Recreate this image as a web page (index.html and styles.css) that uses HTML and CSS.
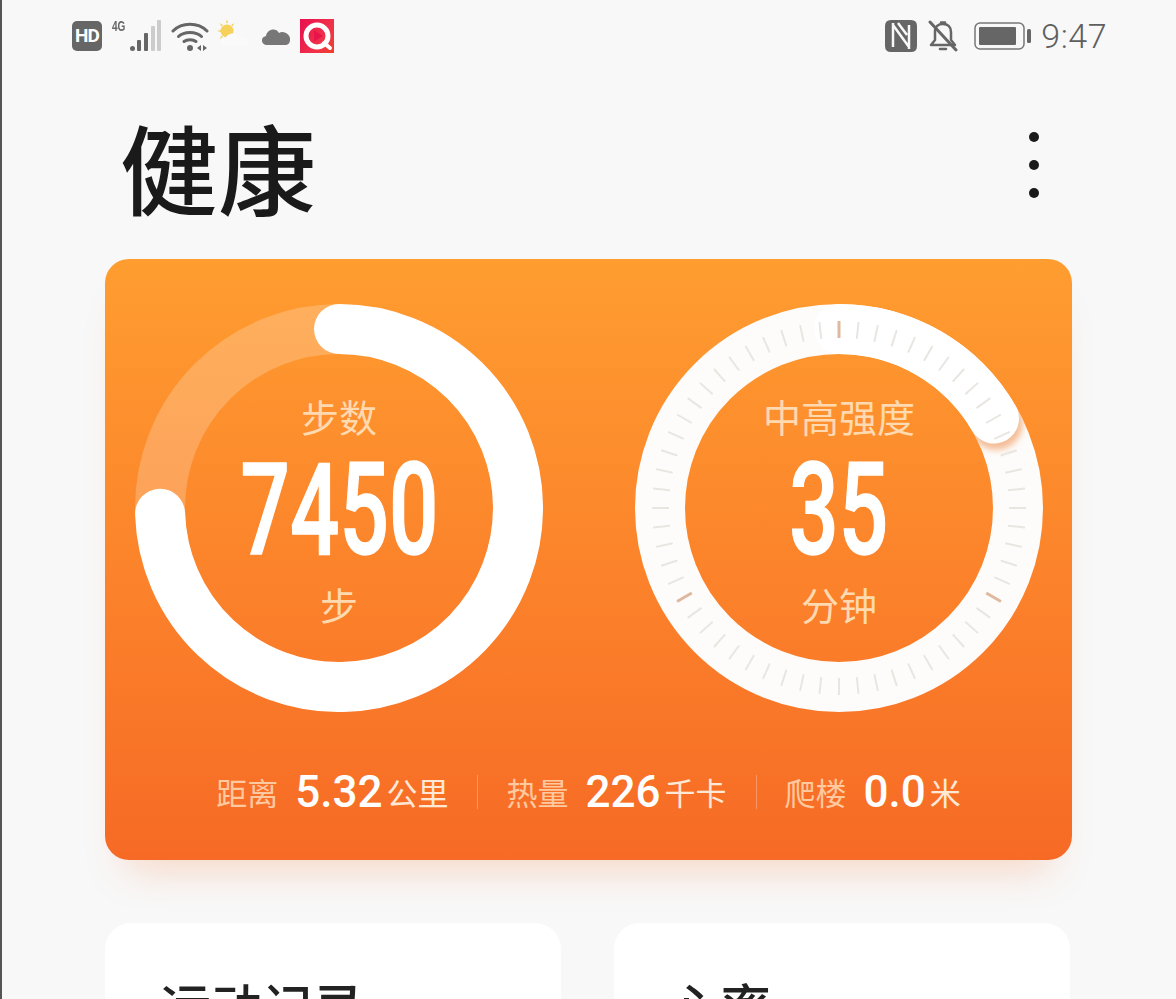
FILE: index.html
```html
<!DOCTYPE html>
<html lang="zh">
<head>
<meta charset="utf-8">
<title>健康</title>
<link rel="stylesheet" href="styles.css">
</head>
<body>
<div class="page">
  <header class="status">
    <div class="status-left">
      <span class="hd">HD</span>
      <span class="net"><span class="net-label">4G</span>
        <svg class="signal" width="32" height="32" viewBox="0 0 32 32"><rect x="0" y="26" width="5" height="5" rx="2.5" fill="#666"/><rect x="7" y="20" width="4" height="11" rx="1" fill="#666"/><rect x="14" y="13" width="4" height="18" rx="1" fill="#666"/><rect x="21" y="6" width="4" height="25" rx="1" fill="#ccc"/><rect x="27" y="0" width="4" height="31" rx="1" fill="#ccc"/></svg>
      </span>
      <svg class="wifi" width="38" height="32" viewBox="0 0 38 32" fill="none" stroke="#666" stroke-width="3" stroke-linecap="round"><path d="M2 10 C11 1 27 1 36 10"/><path d="M7.500 15.500 C13 10 25 10 30.500 15.500"/><path d="M13 20.500 C16 18 22 18 25 20.500"/><circle cx="19" cy="27" r="3" fill="#666" stroke="none"/><path d="M26 27 L30 24 V30 Z M32 24 V30 L36 27 Z" fill="#666" stroke="none"/></svg>
      <svg class="weather" width="34" height="34" viewBox="0 0 34 34"><g fill="#f6d25a"><circle cx="10" cy="13" r="6.500"/><path d="M10 1 L11 5 H9Z M0 13 L4 12 V14Z M2.500 5 L6 7 L4.500 8.500Z M17.500 5 L14 7 L15.500 8.500Z M2.500 21 L6 19 L4.500 17.500Z"/></g><path d="M7 28 C2 28 2 21 8 21 C10 15 19 13 22 20 C27 18 33 22 32 28 Z" fill="#fafafa"/></svg>
      <svg class="cloud" width="31" height="24" viewBox="0 0 31 24"><path d="M7 21 C1 21 0 13 6 12 C7 5 16 3 19 9 C24 6 31 11 30 16 C30 19 28 21 25 21 Z" fill="#777"/></svg>
      <span class="applogo"><svg width="34" height="34" viewBox="0 0 34 34"><circle cx="17" cy="17" r="11" fill="none" stroke="#fff" stroke-width="5"/><path d="M24 24 L30 29" stroke="#fff" stroke-width="4" stroke-linecap="round"/><path d="M14 11.500 L23 17 L14 22.500 Z" fill="#e8144c"/></svg></span>
    </div>
    <div class="status-right">
      <svg class="nfc" width="32" height="32" viewBox="0 0 32 32"><path d="M6 0 H26 Q32 0 32 6 V26 Q32 32 26 32 H6 Q0 32 0 26 V6 Q0 0 6 0 Z" fill="#666"/><path d="M8 3 V27 M8 5 L24 27 M24 5 V29 M13 3 L22 15" fill="none" stroke="#f8f8f8" stroke-width="2.500"/></svg>
      <svg class="bell" width="30" height="32" viewBox="0 0 30 32" fill="none" stroke="#666" stroke-width="2.500" stroke-linecap="round" stroke-linejoin="round"><path d="M7 11 C7 7 10 4 15 4 C20 4 23 7 23 12 V20 L27 25 H3 L7 20 Z"/><path d="M13 2.500 H17 M12 29 H18"/><path d="M2 2 L28 30" stroke-width="3"/></svg>
      <svg class="battery" width="58" height="28" viewBox="0 0 58 28"><rect x="1" y="1" width="49" height="26" rx="5" fill="none" stroke="#777" stroke-width="1.500"/><rect x="5" y="5" width="37" height="18" rx="1" fill="#666"/><rect x="53" y="7" width="4" height="14" rx="1.500" fill="#666"/></svg>
      <span class="clock">9:47</span>
    </div>
  </header>

  <section class="head">
    <h1 class="title">健康</h1>
    <div class="more"><i></i><i></i><i></i></div>
  </section>

  <section class="summary">
    <div class="rings">
      <div class="ring">
        <svg class="ring-art" width="408" height="408" viewBox="0 0 408 408" fill="none">
          <circle cx="204" cy="204" r="179" stroke="#fff" stroke-opacity=".22" stroke-width="50"/>
          <path id="steps-arc" d="M204 25 A179 179 0 1 1 25.100 209.700" stroke="#fff" stroke-width="50" stroke-linecap="round"/>
        </svg>
        <div class="ring-text">
          <span class="ring-label">步数</span>
          <span class="ring-value">7450</span>
          <span class="ring-label">步</span>
        </div>
      </div>
      <div class="ring">
        <svg class="ring-art" id="dial" width="408" height="408" viewBox="0 0 408 408" fill="none">
          <defs>
            <clipPath id="band"><path clip-rule="evenodd" d="M204 0 A204 204 0 1 1 204 408 A204 204 0 1 1 204 0 Z M204 50 A154 154 0 1 0 204 358 A154 154 0 1 0 204 50 Z"/></clipPath>
            <filter id="soft" x="-50%" y="-50%" width="200%" height="200%"><feGaussianBlur stdDeviation="3"/></filter>
          </defs>
          <circle cx="204" cy="204" r="179" stroke="#fdfcfa" stroke-width="50"/>
          <g clip-path="url(#band)"><circle cx="361" cy="119" r="27" fill="#f4bd97" filter="url(#soft)"/></g>
          <path d="M204 25 A179 179 0 0 1 359 114.500" stroke="#fff" stroke-width="50" stroke-linecap="round"/>
          <g id="ticks"></g>
        </svg>
        <div class="ring-text">
          <span class="ring-label">中高强度</span>
          <span class="ring-value">35</span>
          <span class="ring-label">分钟</span>
        </div>
      </div>
    </div>
    <div class="stats">
      <span class="stat-label">距离</span><b class="stat-num">5.32</b><span class="stat-unit">公里</span>
      <i class="sep"></i>
      <span class="stat-label">热量</span><b class="stat-num">226</b><span class="stat-unit">千卡</span>
      <i class="sep"></i>
      <span class="stat-label">爬楼</span><b class="stat-num">0.0</b><span class="stat-unit">米</span>
    </div>
  </section>

  <section class="cards">
    <article class="card"><h2>运动记录</h2></article>
    <article class="card"><h2>心率</h2></article>
  </section>
</div>
<script src="ticks.js"></script>
</body>
</html>
```
FILE: styles.css
```css
* { box-sizing: border-box; }
html, body { margin: 0; padding: 0; height: 100%; overflow: hidden; }
body { background: #f8f8f8; font-family: "Noto Sans CJK SC", "Noto Sans", sans-serif; }
.page { width: 1176px; height: 999px; overflow: hidden; border-left: 2px solid #555; padding-left: 103px; }

.status { display: flex; justify-content: space-between; align-items: center; height: 72px; margin-left: -33px; padding-right: 69px; }
.status-left, .status-right { display: flex; align-items: center; }
.hd { width: 30px; height: 30px; border-radius: 5px; background: #666; color: #fff; font: 700 19px/30px "Roboto", sans-serif; text-align: center; letter-spacing: -1px; }
.net { display: flex; align-items: flex-end; margin-left: 10px; position: relative; width: 50px; height: 34px; }
.net-label { font: 700 14px/14px "Liberation Sans", sans-serif; color: #666; transform: scaleX(.72); transform-origin: left top; align-self: flex-start; width: 18px; }
.signal { margin-bottom: 1px; }
.wifi { margin-left: 9px; margin-top: 2px; }
.weather { margin-left: 8px; margin-top: -2px; }
.cloud { margin-left: 9px; margin-top: 0; }
.applogo { display: block; width: 34px; height: 34px; margin-left: 9px; background: linear-gradient(120deg, #e8104e, #f0304a 60%, #f0402c); margin-top: -1px; }
.applogo svg { display: block; }
.status-right .nfc { margin-right: 11px; }
.status-right .bell { margin-right: 16px; }
.status-right .battery { margin-right: 9px; }
.clock { font: 300 34px/40px "Roboto", sans-serif; color: #5f5f5f; letter-spacing: .5px; }

.head { display: flex; justify-content: space-between; align-items: center; height: 187px; margin-left: 15px; padding-right: 137px; }
.title { margin: 0; font-size: 98px; font-weight: 500; line-height: 187px; color: #1a1a1a; }
.more { display: flex; flex-direction: column; gap: 18px; margin-top: -2px; }
.more i { display: block; width: 10px; height: 10px; border-radius: 50%; background: #1a1a1a; }

.summary { width: 967px; height: 601px; border-radius: 24px; background: linear-gradient(180deg, #ff9d30 0%, #fb7f2a 60%, #f66a25 100%); box-shadow: 0 30px 40px -22px rgba(246, 120, 50, .28); padding-top: 45px; }
.rings { display: flex; gap: 92px; padding-left: 30px; }
.ring { position: relative; width: 408px; height: 408px; }
.ring-art { display: block; }
.ring-text { position: absolute; inset: 0; display: flex; flex-direction: column; align-items: center; }
.ring-label { font-size: 38px; line-height: 50px; color: #ffd9b0; }
.ring-text .ring-label:first-child { margin-top: 87px; }
.ring-value { font: 500 128px/122px "Roboto", sans-serif; color: #fff; letter-spacing: 0; transform: scaleX(.68); margin: 8px 0 0; height: 130px; -webkit-text-stroke: 1.500px #fff; }

.stats { display: flex; align-items: center; justify-content: center; height: 60px; margin-top: 50px; color: #fff; }
.stat-label { font-size: 31px; line-height: 60px; color: #ffc9a0; margin-right: 17px; }
.stat-num { font: 500 44px/60px "Roboto", sans-serif; color: #fff; margin-right: 4px; }
.stat-unit { font-size: 31px; line-height: 60px; color: #ffe8d6; }
.sep { display: block; width: 1px; height: 34px; background: rgba(255, 255, 255, .28); margin: 0 28px 0 29px; }

.cards { display: flex; gap: 53px; margin-top: 63px; }
.card { width: 456px; height: 200px; border-radius: 26px; background: #fff; padding: 52px 0 0 55px; }
.card h2 { margin: 0; font-size: 51px; font-weight: 500; line-height: 60px; color: #222; }
```
FILE: ticks.js
```js
var g = document.getElementById('ticks');
var NS = 'http://www.w3.org/2000/svg';
for (var a = 0; a < 60; a++) {
  var t = a * 6 * Math.PI / 180;
  var l = document.createElementNS(NS, 'line');
  var major = a % 20 === 0;
  l.setAttribute('x1', 204 + 170 * Math.sin(t));
  l.setAttribute('y1', 204 - 170 * Math.cos(t));
  l.setAttribute('x2', 204 + 187 * Math.sin(t));
  l.setAttribute('y2', 204 - 187 * Math.cos(t));
  l.setAttribute('stroke', major ? '#deb9a0' : '#e9e6e2');
  l.setAttribute('stroke-width', major ? '3' : '2');
  g.appendChild(l);
}
```
